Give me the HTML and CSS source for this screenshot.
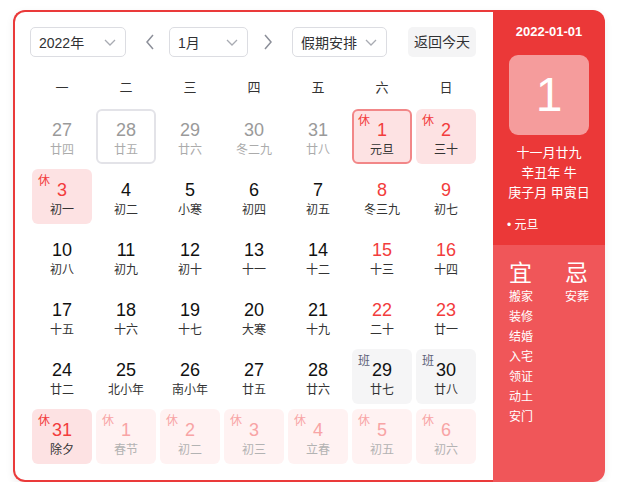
FILE: index.html
```html
<!DOCTYPE html>
<html lang="zh">
<head>
<meta charset="utf-8">
<title>万年历</title>
<link rel="stylesheet" href="styles.css">
</head>
<body>
<div class="calendar">
  <div class="main">
    <div class="toolbar">
      <div class="select sel-year"><span>2022年</span><svg class="chev" viewBox="0 0 12 7" width="12" height="7"><path d="M1 1l5 5 5-5" fill="none" stroke="#a8abb2" stroke-width="1.3"/></svg></div>
      <div class="arrow arrow-prev"><svg viewBox="0 0 8 16" width="8" height="16"><path d="M7 1L1 8l6 7" fill="none" stroke="#8c8f99" stroke-width="1.5"/></svg></div>
      <div class="select sel-month"><span>1月</span><svg class="chev" viewBox="0 0 12 7" width="12" height="7"><path d="M1 1l5 5 5-5" fill="none" stroke="#a8abb2" stroke-width="1.3"/></svg></div>
      <div class="arrow arrow-next"><svg viewBox="0 0 8 16" width="8" height="16"><path d="M1 1l6 7-6 7" fill="none" stroke="#8c8f99" stroke-width="1.5"/></svg></div>
      <div class="select sel-holiday"><span>假期安排</span><svg class="chev" viewBox="0 0 12 7" width="12" height="7"><path d="M1 1l5 5 5-5" fill="none" stroke="#a8abb2" stroke-width="1.3"/></svg></div>
      <div class="btn-today">返回今天</div>
    </div>
    <div class="weekdays">
      <span>一</span><span>二</span><span>三</span><span>四</span><span>五</span><span>六</span><span>日</span>
    </div>
    <div class="grid">
      <div class="cell other"><div class="num">27</div><div class="lunar">廿四</div></div>
      <div class="cell other outlined"><div class="num">28</div><div class="lunar">廿五</div></div>
      <div class="cell other"><div class="num">29</div><div class="lunar">廿六</div></div>
      <div class="cell other"><div class="num">30</div><div class="lunar">冬二九</div></div>
      <div class="cell other"><div class="num">31</div><div class="lunar">廿八</div></div>
      <div class="cell rest selected"><span class="tag">休</span><div class="num">1</div><div class="lunar">元旦</div></div>
      <div class="cell rest"><span class="tag">休</span><div class="num">2</div><div class="lunar">三十</div></div>

      <div class="cell rest"><span class="tag">休</span><div class="num">3</div><div class="lunar">初一</div></div>
      <div class="cell"><div class="num">4</div><div class="lunar">初二</div></div>
      <div class="cell"><div class="num">5</div><div class="lunar">小寒</div></div>
      <div class="cell"><div class="num">6</div><div class="lunar">初四</div></div>
      <div class="cell"><div class="num">7</div><div class="lunar">初五</div></div>
      <div class="cell weekend"><div class="num">8</div><div class="lunar">冬三九</div></div>
      <div class="cell weekend"><div class="num">9</div><div class="lunar">初七</div></div>

      <div class="cell"><div class="num">10</div><div class="lunar">初八</div></div>
      <div class="cell"><div class="num">11</div><div class="lunar">初九</div></div>
      <div class="cell"><div class="num">12</div><div class="lunar">初十</div></div>
      <div class="cell"><div class="num">13</div><div class="lunar">十一</div></div>
      <div class="cell"><div class="num">14</div><div class="lunar">十二</div></div>
      <div class="cell weekend"><div class="num">15</div><div class="lunar">十三</div></div>
      <div class="cell weekend"><div class="num">16</div><div class="lunar">十四</div></div>

      <div class="cell"><div class="num">17</div><div class="lunar">十五</div></div>
      <div class="cell"><div class="num">18</div><div class="lunar">十六</div></div>
      <div class="cell"><div class="num">19</div><div class="lunar">十七</div></div>
      <div class="cell"><div class="num">20</div><div class="lunar">大寒</div></div>
      <div class="cell"><div class="num">21</div><div class="lunar">十九</div></div>
      <div class="cell weekend"><div class="num">22</div><div class="lunar">二十</div></div>
      <div class="cell weekend"><div class="num">23</div><div class="lunar">廿一</div></div>

      <div class="cell"><div class="num">24</div><div class="lunar">廿二</div></div>
      <div class="cell"><div class="num">25</div><div class="lunar">北小年</div></div>
      <div class="cell"><div class="num">26</div><div class="lunar">南小年</div></div>
      <div class="cell"><div class="num">27</div><div class="lunar">廿五</div></div>
      <div class="cell"><div class="num">28</div><div class="lunar">廿六</div></div>
      <div class="cell work"><span class="tag">班</span><div class="num">29</div><div class="lunar">廿七</div></div>
      <div class="cell work"><span class="tag">班</span><div class="num">30</div><div class="lunar">廿八</div></div>

      <div class="cell rest"><span class="tag">休</span><div class="num">31</div><div class="lunar">除夕</div></div>
      <div class="cell rest next"><span class="tag">休</span><div class="num">1</div><div class="lunar">春节</div></div>
      <div class="cell rest next"><span class="tag">休</span><div class="num">2</div><div class="lunar">初二</div></div>
      <div class="cell rest next"><span class="tag">休</span><div class="num">3</div><div class="lunar">初三</div></div>
      <div class="cell rest next"><span class="tag">休</span><div class="num">4</div><div class="lunar">立春</div></div>
      <div class="cell rest next"><span class="tag">休</span><div class="num">5</div><div class="lunar">初五</div></div>
      <div class="cell rest next"><span class="tag">休</span><div class="num">6</div><div class="lunar">初六</div></div>
    </div>
  </div>
  <div class="side">
    <div class="side-top">
      <div class="date">2022-01-01</div>
      <div class="bigday">1</div>
      <div class="lunar-info">
        <div>十一月廿九</div>
        <div>辛丑年 牛</div>
        <div>庚子月 甲寅日</div>
      </div>
      <div class="festival">• 元旦</div>
    </div>
    <div class="side-bottom">
      <div class="yiji">
        <div class="yj-col yj-yi">
          <div class="yj-title">宜</div>
          <div class="yj-item">搬家</div>
          <div class="yj-item">装修</div>
          <div class="yj-item">结婚</div>
          <div class="yj-item">入宅</div>
          <div class="yj-item">领证</div>
          <div class="yj-item">动土</div>
          <div class="yj-item">安门</div>
        </div>
        <div class="yj-col yj-ji">
          <div class="yj-title">忌</div>
          <div class="yj-item">安葬</div>
        </div>
      </div>
    </div>
  </div>
</div>
</body>
</html>
```
FILE: styles.css
```css
* { box-sizing: border-box; }
html, body { margin: 0; padding: 0; background: #fff; }
body {
  font-family: "Liberation Sans", Arial, "Noto Sans CJK SC", sans-serif;
  color: #333;
}
.calendar {
  display: flex;
  width: 592px;
  height: 472px;
  margin: 10px 0 0 13px;
  border-radius: 12px;
  box-shadow: 0 3px 8px rgba(0, 0, 0, 0.07);
}
.main {
  width: 480px;
  height: 100%;
  border: 2px solid #ea3a3a;
  border-right: none;
  border-radius: 12px 0 0 12px;
  padding: 15px 0 0 15px;
}
.toolbar {
  display: flex;
  align-items: center;
  height: 30px;
}
.select {
  height: 30px;
  border: 1px solid #dcdde2;
  border-radius: 5px;
  display: flex;
  align-items: center;
  justify-content: space-between;
  padding: 0 9px 0 8px;
  font-size: 14px;
  color: #303133;
}
.chev { display: block; }
.sel-year { width: 96px; }
.sel-month { width: 79px; }
.sel-holiday { width: 95px; }
.arrow {
  width: 24px;
  height: 30px;
  display: flex;
  align-items: center;
  justify-content: center;
}
.arrow svg { display: block; }
.arrow-prev { margin: 0 7px 0 12px; }
.arrow-next { margin: 0 12px 0 8px; }
.btn-today {
  margin-left: 21px;
  width: 68px;
  height: 30px;
  line-height: 30px;
  text-align: center;
  background: #f4f4f5;
  border-radius: 5px;
  font-size: 14px;
  color: #303133;
}
.weekdays {
  display: grid;
  grid-template-columns: repeat(7, 60px);
  column-gap: 4px;
  margin: 10px 0 0 2px;
  height: 42px;
  line-height: 42px;
  text-align: center;
  font-size: 13px;
  color: #333;
}
.grid {
  display: grid;
  grid-template-columns: repeat(7, 60px);
  grid-auto-rows: 55px;
  column-gap: 4px;
  row-gap: 5px;
  margin-left: 2px;
}
.cell {
  position: relative;
  border-radius: 6px;
  padding-top: 10px;
  text-align: center;
}
.num {
  font-size: 18px;
  line-height: 22px;
  color: #111;
}
.lunar {
  font-size: 12px;
  line-height: 18px;
  color: #333;
}
.tag {
  position: absolute;
  top: 5px;
  left: 6px;
  font-size: 12px;
  line-height: 14px;
}
.other .num { color: #9a9a9a; }
.other .lunar { color: #ababab; }
.outlined {
  border: 2px solid #e3e3e8;
  padding-top: 8px;
}
.weekend .num { color: #f23c3c; }
.rest { background: #fde2e3; }
.rest .num { color: #f23c3c; }
.rest .tag { color: #f23c3c; }
.selected {
  border: 2px solid #f28788;
  padding-top: 8px;
}
.selected .tag { top: 3px; left: 4px; }
.work { background: #f5f5f6; }
.work .tag { color: #5c6078; }
.next { background: #fff2f2; }
.next .num, .next .tag { color: #f8a4a5; }
.next .lunar { color: #b3b3b3; }

.side {
  width: 112px;
  height: 100%;
  border-radius: 0 12px 12px 0;
  overflow: hidden;
  display: flex;
  flex-direction: column;
  color: #fff;
}
.side-top {
  background: #eb3838;
  padding: 12px 0 10px;
  display: flex;
  flex-direction: column;
  align-items: center;
}
.date {
  font-size: 13px;
  line-height: 20px;
  font-weight: bold;
}
.bigday {
  margin-top: 13px;
  width: 80px;
  height: 80px;
  border-radius: 9px;
  background: rgba(255, 255, 255, 0.5);
  font-size: 48px;
  line-height: 80px;
  text-align: center;
  color: #fff;
}
.lunar-info {
  margin-top: 8px;
  font-size: 13px;
  line-height: 20px;
  text-align: center;
}
.festival {
  align-self: flex-start;
  margin: 12px 0 0 14px;
  font-size: 12px;
  line-height: 20px;
}
.side-bottom {
  flex: 1;
  background: #f05659;
  padding: 14px 0 0 16px;
}
.yiji { display: flex; }
.yj-col { flex: 0 0 auto; }
.yj-yi { width: 56px; }
.yj-title {
  font-size: 23px;
  line-height: 28px;
}
.yj-item {
  font-size: 12px;
  line-height: 20px;
}
```
